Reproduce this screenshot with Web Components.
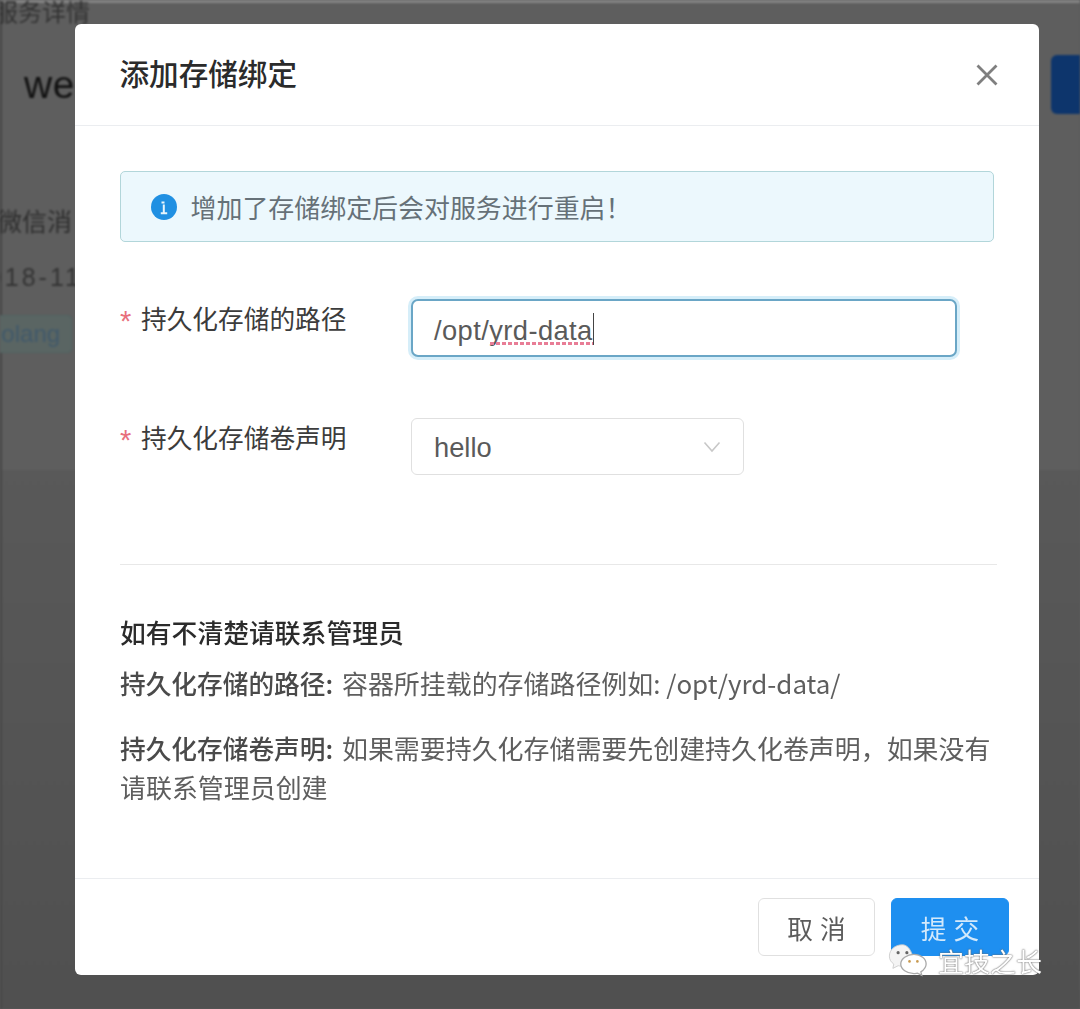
<!DOCTYPE html>
<html lang="zh"><head><meta charset="utf-8"><style>
html,body{margin:0;padding:0;height:100%;background:#5a5a5a}
body{width:1080px;height:1009px;overflow:hidden;position:relative;font-family:"Liberation Sans","Noto Sans CJK SC",sans-serif}
</style></head><body>
<page-behind></page-behind>
<bind-dialog>
  <span slot="title">添加存储绑定</span>
  <info-alert>增加了存储绑定后会对服务进行重启！</info-alert>
  <form-row label="持久化存储的路径"><text-box value="/opt/yrd-data"></text-box></form-row>
  <form-row label="持久化存储卷声明"><select-box value="hello"></select-box></form-row>
  <help-notes></help-notes>
  <ui-button slot="footer">取 消</ui-button>
  <ui-button slot="footer" primary>提 交</ui-button>
</bind-dialog>
<mark-stamp></mark-stamp>
<script>
function def(name,html,init){
  customElements.define(name,class extends HTMLElement{
    constructor(){super();this.attachShadow({mode:'open'}).innerHTML=html;}
    connectedCallback(){if(init)init(this,this.shadowRoot);}
  });
}
def('page-behind',`<style>
:host{display:block;width:1080px;height:1009px;background:linear-gradient(#5e5e5e 0 470px,#595959 470px,#505050 1009px);color:#1d1d1d;overflow:hidden;filter:blur(.8px);box-shadow:inset 2px 0 #474747}
.crumb{height:20px;font-size:24px;line-height:20px;color:#333;margin-left:-6px;border-top:3px solid #858585}
.head{display:flex;justify-content:space-between;height:59px;margin-top:32px;padding-left:24px;align-items:center}
.web{font-size:39px;letter-spacing:.5px;color:#111}
.btn{width:29px;height:59px;background:#0d356c;border-radius:6px 0 0 6px}
.l1{margin-top:90px;font-size:25px;line-height:36px;color:#2e2e2e;height:36px;margin-left:-3px}
.l2{margin-top:19px;font-size:25px;line-height:36px;color:#333;letter-spacing:3px;margin-left:-29px;height:36px}
.tag{margin-top:20px;margin-left:-21px;width:93px;height:38px;box-sizing:border-box;border:1px solid #4f6261;background:#5a6563;border-radius:4px;color:#41596a;font-size:24px;line-height:35px;padding-left:8px;overflow:hidden}
</style>
<div class="crumb">服务详情</div>
<div class="head"><span class="web">web</span><span class="btn"></span></div>
<div class="l1">微信消</div>
<div class="l2">2018-11</div>
<div class="tag">golang</div>`);
def('bind-dialog',`<style>
:host{position:absolute;left:75px;top:24px;width:964px;height:951px;box-sizing:border-box;background:#fff;border-radius:6px;display:flex;flex-direction:column;filter:blur(.45px)}
header{height:102px;box-sizing:border-box;border-bottom:1px solid #ebedf0;display:flex;align-items:center;justify-content:space-between;padding:0 40px 0 44.500px;flex:none}
.t{font-size:29.6px;font-weight:500;color:#2b2b2b;font-family:"Noto Sans CJK SC",sans-serif;margin-top:-4px}
svg{display:block;margin-top:1px}
main{flex:1;padding:45px 45px 0;min-height:0}
footer{flex:none;height:97px;box-sizing:border-box;border-top:1px solid #ebedf0;display:flex;justify-content:flex-end;gap:16px;padding:19px 30px 0 0}
</style>
<header><span class="t"><slot name="title"></slot></span>
<svg width="24" height="24" viewBox="0 0 24 24"><path d="M2.500 2.500l19 19M21.500 2.500l-19 19" stroke="#7f7f7f" stroke-width="2.800" fill="none"/></svg></header>
<main><slot></slot></main>
<footer><slot name="footer"></slot></footer>`);
def('info-alert',`<style>
:host{display:flex;align-items:center;box-sizing:border-box;height:71px;width:874px;background:#ecf8fd;border:1.500px solid #b2d6da;border-radius:5px;padding-left:30px;color:#667178;font-size:25.950px;font-family:"Noto Sans CJK SC",sans-serif;margin-bottom:57px}
svg{flex:none;margin-right:13.500px}
</style>
<svg width="26" height="26" viewBox="0 0 26 26"><circle cx="13" cy="13" r="13" fill="#2090e2"/><path d="M10.500 8.500h3M12.800 10.500v8.500M9.800 19.200h6.400" stroke="#e8f6fc" stroke-width="2" fill="none"/></svg><span><slot></slot></span>`);
def('form-row',`<style>
:host{display:flex;align-items:flex-start;margin-bottom:61px;height:58px}
.lab{width:291px;flex:none;font-size:25.700px;color:#3c3c3c;line-height:38px;font-family:"Noto Sans CJK SC",sans-serif;display:flex}
.star{color:#e8707c;width:21px;font-size:29px;line-height:44px;font-family:"Liberation Sans",sans-serif}
</style><div class="lab"><span class="star">*</span><span id="l"></span></div><slot></slot>`,(h,s)=>{s.getElementById('l').textContent=h.getAttribute('label')});
def('text-box',`<style>
:host{display:flex;align-items:center;box-sizing:border-box;width:546px;height:58px;border:2px solid #6aa6c6;border-radius:7px;box-shadow:0 0 0 3px #d6eef9;padding-left:21px;font-size:27.300px;color:#5a5a5a;background:#fff}
.v{position:relative;letter-spacing:.42px;display:inline-block;padding-top:5px}
.caret{display:inline-block;width:1.500px;height:32px;background:#444;margin-top:2px}
.sq{position:absolute;left:56px;right:0;bottom:2px;height:3px;background:repeating-linear-gradient(90deg,#e87d96 0 4px,transparent 4px 6px)}
</style><span class="v"><span id="t"></span><span class="sq"></span></span><span class="caret"></span>`,(h,s)=>{s.getElementById('t').textContent=h.getAttribute('value')});
def('select-box',`<style>
:host{display:flex;align-items:center;justify-content:space-between;box-sizing:border-box;width:333px;height:57px;border:1.500px solid #e0e0e0;border-radius:6px;padding:0 22px;font-size:27.300px;color:#5a5a5a;background:#fff}
#t{padding-top:2px}
</style><span id="t"></span><svg width="18" height="12" viewBox="0 0 18 12"><path d="M1.500 1.500L9 10l7.500-8.500" stroke="#c8c8c8" stroke-width="1.600" fill="none"/></svg>`,(h,s)=>{s.getElementById('t').textContent=h.getAttribute('value')});
def('help-notes',`<style>
:host{display:block;font-family:"Noto Sans CJK SC",sans-serif;font-size:25.950px;color:#5e5e5e;line-height:39px;border-top:1px solid #e8e8e8;margin-top:88px;padding-top:47px;width:877px}
h4{margin:0 0 11px;font-size:25.800px;font-weight:500;color:#2b2b2b;line-height:40px}
p{margin:0 0 26px;width:874px}
b{font-weight:500;color:#4a4a4a;font-size:25.700px;margin-right:3px}
span{display:block;white-space:nowrap}
</style><h4>如有不清楚请联系管理员</h4>
<p><span><b>持久化存储的路径:</b> 容器所挂载的存储路径例如: /opt/yrd-data/</span></p>
<p><span><b>持久化存储卷声明:</b> 如果需要持久化存储需要先创建持久化卷声明，如果没有</span><span>请联系管理员创建</span></p>`);
def('ui-button',`<style>
:host{display:flex;align-items:center;justify-content:center;box-sizing:border-box;width:117px;height:58px;border:1.500px solid #e0e0e0;border-radius:6px;font-size:25.700px;color:#5c5c5c;background:#fff;font-family:"Noto Sans CJK SC",sans-serif;white-space:pre;word-spacing:1.500px}
:host([primary]){width:118px;background:#1e8ff0;border-color:#1e8ff0;color:#d3e9fb}
</style><slot></slot>`);
def('mark-stamp',`<style>
:host{position:absolute;left:885px;top:941px;display:flex;align-items:center;height:38px;color:#fff;font-size:26px;font-family:"Noto Sans CJK SC",sans-serif;text-shadow:0 0 2px #666,0 0 1px #777;filter:blur(.4px)}
svg{margin-right:11px;flex:none}
</style><svg width="42" height="35" viewBox="0 0 48 40"><path d="M20 2C11 2 5 8 5 15c0 4 2 7 5 9l-1 5 6-3c1 0 2 .5 4 .5C18 24 19 16 31 13 29 7 25 2 20 2z" fill="#f4f4f4" stroke="#ccc"/><circle cx="15" cy="11" r="1.800" fill="#666"/><circle cx="25" cy="11" r="1.800" fill="#666"/><path d="M33 13c-8 0-15 5-15 11s7 11 15 11c2 0 3-.5 4-.5l5 2.500-1-4c3-2 6-5 6-9 0-6-6-11-14-11z" fill="#fff" stroke="#aaa" stroke-width="1.500"/><circle cx="28" cy="21" r="1.500" fill="#c89a50"/><circle cx="37" cy="21" r="1.500" fill="#c89a50"/></svg><span>宜技之长</span>`);
</script>
</body></html>
